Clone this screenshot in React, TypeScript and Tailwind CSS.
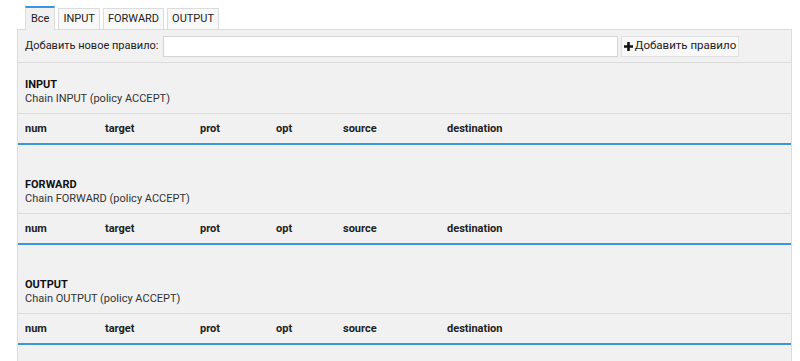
import React from "react";

const cols = [
  { name: "num", w: "w-[80px]" },
  { name: "target", w: "w-[95px]" },
  { name: "prot", w: "w-[76px]" },
  { name: "opt", w: "w-[67px]" },
  { name: "source", w: "w-[104px]" },
  { name: "destination", w: "" },
];

function Section({ name }: { name: string }) {
  return (
    <div className="pt-[15px] pb-[18px]">
      <div className="px-[7px] mb-[7px]">
        <div className="font-bold text-[11px] leading-[14px] text-[#111]">{name}</div>
        <div className="text-[11px] leading-[14px] text-[#333]">
          Chain {name} (policy ACCEPT)
        </div>
      </div>
      <div className="border-t border-[#dcdcdc] border-b-2 border-b-[#3a97dc] flex h-[32px] items-center pt-[2px]">
        {cols.map((c) => (
          <div
            key={c.name}
            className={`${c.w} pl-[7px] font-bold text-[11px] text-[#222] shrink-0`}
          >
            {c.name}
          </div>
        ))}
      </div>
    </div>
  );
}

export default function App() {
  return (
    <div
      className="bg-white w-[800px] h-[361px] overflow-hidden pl-[17px] pr-[8px] pt-[6px]"
      style={{ fontFamily: "Roboto, 'Noto Sans', sans-serif" }}
    >
      <div className="flex items-end gap-[3px] pl-[8px] h-[23px]">
        <div className="h-[24px] px-[5px] border border-[#dcdcdc] border-t-2 border-t-[#3a97dc] border-b-0 bg-[#f1f1f1] text-[11px] text-[#222] flex items-center relative top-[1px]">
          Все
        </div>
        {["INPUT", "FORWARD", "OUTPUT"].map((t) => (
          <div
            key={t}
            className="h-[21px] px-[4px] border border-[#dcdcdc] border-b-0 bg-[#f8f8f8] text-[11px] text-[#222] flex items-center"
          >
            {t}
          </div>
        ))}
      </div>
      <div className="border border-[#dcdcdc] bg-[#f1f1f1] h-[400px]">
        <div className="flex items-center h-[33px] pl-[7px] pr-[52px] border-b border-[#dcdcdc]">
          <span className="text-[11px] text-[#222] mr-[5px] shrink-0 whitespace-nowrap">Добавить новое правило:</span>
          <input className="flex-1 min-w-0 h-[21px] bg-white border border-[#d4d4d4] outline-none" />
          <button className="ml-[3px] h-[21px] w-[118px] shrink-0 whitespace-nowrap bg-[#f8f8f8] border border-[#e0e0e0] flex items-center justify-center gap-[2px] text-[11.5px] text-[#222]">
            <svg width="9" height="9" viewBox="0 0 9 9">
              <path d="M3.2 0h2.6v3.2H9v2.6H5.8V9H3.2V5.8H0V3.2h3.2z" fill="#111" />
            </svg>
            Добавить правило
          </button>
        </div>
        <Section name="INPUT" />
        <Section name="FORWARD" />
        <Section name="OUTPUT" />
      </div>
    </div>
  );
}
